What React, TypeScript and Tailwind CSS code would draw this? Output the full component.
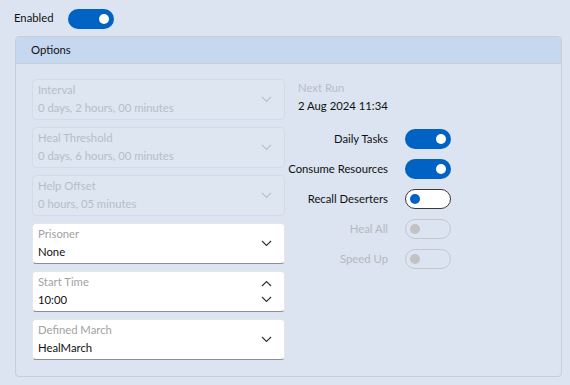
import React from "react";

const Chevron = ({ up = false, color = "#333" }: { up?: boolean; color?: string }) => (
  <svg width="11" height="7" viewBox="0 0 11 7" className="block">
    <path
      d={up ? "M1 6 L5.5 1.5 L10 6" : "M1 1 L5.5 5.5 L10 1"}
      fill="none"
      stroke={color}
      strokeWidth="1.2"
    />
  </svg>
);

const Toggle = ({ state }: { state: "on" | "off" | "disabled" }) => {
  if (state === "on")
    return (
      <div className="w-[46px] h-[20px] rounded-full bg-[#0063c4] flex items-center justify-end pr-[5px] shrink-0">
        <div className="w-[10px] h-[10px] rounded-full bg-white" />
      </div>
    );
  if (state === "off")
    return (
      <div className="w-[46px] h-[20px] rounded-full bg-white border border-[#3a3a3a] flex items-center pl-[4px] shrink-0">
        <div className="w-[10px] h-[10px] rounded-full bg-[#0063c4]" />
      </div>
    );
  return (
    <div className="w-[46px] h-[20px] rounded-full border border-[#c4c8ce] flex items-center pl-[4px] shrink-0">
      <div className="w-[10px] h-[10px] rounded-full bg-[#c2c2c2]" />
    </div>
  );
};

const Field = ({
  label,
  value,
  disabled = false,
  spin = false,
}: {
  label: string;
  value: string;
  disabled?: boolean;
  spin?: boolean;
}) => (
  <div
    className={
      disabled
        ? "h-[41px] rounded-[4px] border border-[#d3dbe6] bg-[#dde6f1] flex items-center pl-[5px] pr-[12px]"
        : "h-[41px] rounded-[4px] border border-[#e6e6e6] border-b-[#8e8e8e] bg-white flex items-center pl-[5px] pr-[12px]"
    }
  >
    <div className="flex-1 flex flex-col">
      <div className={disabled ? "text-[11.3px] leading-[16px] text-[#b7bec8]" : "text-[11.3px] leading-[16px] text-[#a2a2a2]"}>
        {label}
      </div>
      <div className={disabled ? "text-[11.3px] leading-[20px] text-[#b7bec8]" : "text-[11.3px] leading-[20px] text-[#111]"}>
        {value}
      </div>
    </div>
    {spin ? (
      <div className="flex flex-col gap-[9px] items-center">
        <Chevron up />
        <Chevron />
      </div>
    ) : (
      <Chevron color={disabled ? "#b9c0ca" : "#333"} />
    )}
  </div>
);

const ToggleRow = ({ label, state }: { label: string; state: "on" | "off" | "disabled" }) => (
  <div className="h-[30px] flex items-center">
    <div
      className={
        "w-[103px] text-right text-[11.3px] whitespace-nowrap " +
        (state === "disabled" ? "text-[#b4b9c0]" : "text-[#111]")
      }
    >
      {label}
    </div>
    <div className="ml-[17px]">
      <Toggle state={state} />
    </div>
  </div>
);

export default function App() {
  return (
    <div
      className="w-[570px] h-[385px] bg-[#dbe4f0] overflow-hidden"
      style={{ fontFamily: "Lato, 'Noto Sans', sans-serif" }}
    >
      <div className="h-[36px] flex items-center pl-[14px] pt-[1px]">
        <span className="text-[11.3px] text-[#111] w-[54px]">Enabled</span>
        <Toggle state="on" />
      </div>
      <div className="ml-[15px] w-[547px] h-[341px] border border-[#c9ced6] rounded-[4px] overflow-hidden">
        <div className="h-[27px] bg-[#c6d8ef] border-b border-[#c9ced6] flex items-center pl-[15px] text-[11.3px] text-[#111]">
          Options
        </div>
        <div className="flex pl-[16px] pt-[15px]">
          <div className="w-[253px] flex flex-col gap-[7px]">
            <Field label="Interval" value="0 days, 2 hours, 00 minutes" disabled />
            <Field label="Heal Threshold" value="0 days, 6 hours, 00 minutes" disabled />
            <Field label="Help Offset" value="0 hours, 05 minutes" disabled />
            <Field label="Prisoner" value="None" />
            <Field label="Start Time" value="10:00" spin />
            <Field label="Defined March" value="HealMarch" />
          </div>
          <div className="flex flex-col">
            <div className="h-[45px] pl-[13px] pt-[1px]">
              <div className="text-[11.3px] leading-[16px] text-[#b7bec8]">Next Run</div>
              <div className="text-[11.3px] leading-[20px] text-[#111]">2 Aug 2024 11:34</div>
            </div>
            <ToggleRow label="Daily Tasks" state="on" />
            <ToggleRow label="Consume Resources" state="on" />
            <ToggleRow label="Recall Deserters" state="off" />
            <ToggleRow label="Heal All" state="disabled" />
            <ToggleRow label="Speed Up" state="disabled" />
          </div>
        </div>
      </div>
    </div>
  );
}
